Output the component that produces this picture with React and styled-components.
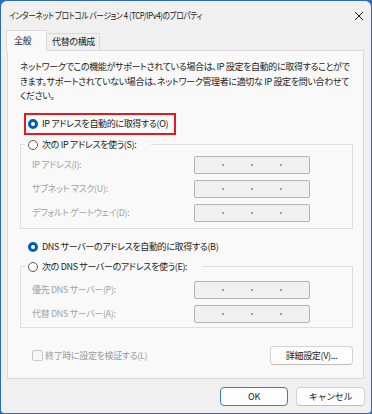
import React from 'react';
import styled, { createGlobalStyle, css } from 'styled-components';

const GlobalStyle = createGlobalStyle`
  html, body {
    margin: 0;
    padding: 0;
    background: #2f6ab8;
  }
  body {
    font-family: "Noto Sans CJK JP", "Noto Sans", sans-serif;
    font-feature-settings: "palt";
    color: #1a1a1a;
  }
  * {
    box-sizing: border-box;
  }
`;

const Window = styled.div`
  width: 372px;
  height: 414px;
  border: 1px solid #2f6ab8;
  border-radius: 7px 7px 4px 4px;
  background: #f0f0f0;
  display: flex;
  flex-direction: column;
  overflow: hidden;
`;

const TitleBar = styled.div`
  height: 29px;
  display: flex;
  align-items: center;
  justify-content: space-between;
  padding: 0 7px 0 8px;
  color: #1a1a1a;
  white-space: nowrap;
`;

const TitleText = styled.span`
  font-size: 9px;
  letter-spacing: -0.4px;
  transform: scaleX(0.85);
  transform-origin: left center;
`;

const Body = styled.div`
  padding: 0 7px 0 6px;
  display: flex;
  flex-direction: column;
  font-size: 9px;
  letter-spacing: -0.35px;
`;

const TabRow = styled.div`
  height: 20px;
  display: flex;
  align-items: flex-end;
`;

const Tab = styled.div`
  position: relative;
  width: ${(props) => props.width}px;
  height: 17px;
  padding-left: 5px;
  line-height: 16px;
  white-space: nowrap;
  background: #f0f0f0;
  border: 1px solid #dadada;
  border-bottom: none;
  border-left: none;

  ${(props) =>
    props.active &&
    css`
      height: 21px;
      margin-left: -1px;
      margin-bottom: -1px;
      padding-left: 7px;
      line-height: 20px;
      background: #f9f9f9;
      border-left: 1px solid #dadada;
      z-index: 1;
    `}
`;

const Panel = styled.div`
  height: 329px;
  background: #f9f9f9;
  border: 1px solid #dadada;
  padding: 9px 10px 0 12px;
  display: flex;
  flex-direction: column;
`;

const Description = styled.p`
  margin: 0;
  line-height: 14.5px;
`;

const Highlight = styled.div`
  margin: 9px 0 0 4px;
  width: 152px;
  height: 22px;
  border: 2px solid #e5191f;
  padding-left: 2px;
  display: flex;
  align-items: center;
`;

const RadioRow = styled.label`
  display: flex;
  align-items: center;
  gap: 4px;
  height: 14px;
  line-height: 14px;
  white-space: nowrap;

  ${(props) =>
    props.indent &&
    css`
      margin: 11px 0 0 8px;
    `}
`;

const RadioDot = styled.span`
  width: 10px;
  height: 10px;
  border-radius: 50%;
  flex: none;
  border: 1px solid #5a5a5a;
  background: #ffffff;

  ${(props) =>
    props.checked &&
    css`
      border: 3px solid #005fb8;
      background: #ffffff;
    `}
`;

const Group = styled.fieldset`
  margin: ${(props) => props.top}px 0 0 0;
  padding: 0 0 ${(props) => props.bottom}px 11px;
  border: 1px solid #dedede;
  min-width: 0;
`;

const Legend = styled.legend`
  margin-left: -7px;
  padding: 0 15px 0 3px;
  height: 14px;
`;

const FieldGrid = styled.div`
  margin-top: ${(props) => props.top}px;
  display: grid;
  grid-template-columns: 162px 116px;
  grid-auto-rows: 18px;
  row-gap: 6px;
  align-items: center;
`;

const FieldLabel = styled.span`
  color: #a3a3a3;
  white-space: nowrap;
`;

const IpBox = styled.div`
  height: 18px;
  background: #f0f0f0;
  border: 1px solid #b3b3b3;
  border-radius: 2px;
  display: flex;
  align-items: center;
  justify-content: space-evenly;
`;

const IpDot = styled.span`
  width: 2px;
  height: 2px;
  background: #b39c84;
`;

const BottomRow = styled.div`
  margin-top: 18px;
  display: flex;
  align-items: center;
  justify-content: space-between;
`;

const CheckRow = styled.label`
  margin-left: 12px;
  display: flex;
  align-items: center;
  gap: 2px;
  color: #9a9a9a;
`;

const CheckBox = styled.span`
  width: 11px;
  height: 11px;
  border: 1px solid #c8c8c8;
  border-radius: 2px;
  background: #f6f6f6;
`;

const Button = styled.button`
  height: 19px;
  width: ${(props) => props.width}px;
  padding: 0;
  font-family: inherit;
  font-size: 9px;
  letter-spacing: -0.35px;
  color: #1a1a1a;
  background: #fdfdfd;
  border: 1px solid #d3d3d3;
  border-bottom-color: #bcbcbc;
  border-radius: 4px;

  ${(props) =>
    props.primary &&
    css`
      border: 1px solid #3d7cc4;
    `}
`;

const Footer = styled.div`
  margin: 8px -1px 0 0;
  display: flex;
  justify-content: flex-end;
  gap: 8px;
`;

function CloseIcon() {
  return (
    <svg width="10" height="10" viewBox="0 0 10 10">
      <path d="M1 1 L9 9 M9 1 L1 9" stroke="#1a1a1a" strokeWidth="1" fill="none" />
    </svg>
  );
}

function IpField() {
  return (
    <IpBox>
      <IpDot />
      <IpDot />
      <IpDot />
    </IpBox>
  );
}

const ipRows = ['IP アドレス(I):', 'サブネット マスク(U):', 'デフォルト ゲートウェイ(D):'];
const dnsRows = ['優先 DNS サーバー(P):', '代替 DNS サーバー(A):'];

export default function App() {
  return (
    <>
      <GlobalStyle />
      <Window>
        <TitleBar>
          <TitleText>インターネット プロトコル バージョン 4 (TCP/IPv4)のプロパティ</TitleText>
          <CloseIcon />
        </TitleBar>
        <Body>
          <TabRow>
            <Tab active width={41}>全般</Tab>
            <Tab width={53}>代替の構成</Tab>
          </TabRow>
          <Panel>
            <Description>
              ネットワークでこの機能がサポートされている場合は、IP 設定を自動的に取得することができます。サポートされていない場合は、ネットワーク管理者に適切な IP 設定を問い合わせてください。
            </Description>
            <Highlight>
              <RadioRow>
                <RadioDot checked />
                IP アドレスを自動的に取得する(O)
              </RadioRow>
            </Highlight>
            <Group top={3} bottom={6}>
              <Legend>
                <RadioRow>
                  <RadioDot />
                  次の IP アドレスを使う(S):
                </RadioRow>
              </Legend>
              <FieldGrid top={4}>
                {ipRows.map((label) => (
                  <React.Fragment key={label}>
                    <FieldLabel>{label}</FieldLabel>
                    <IpField />
                  </React.Fragment>
                ))}
              </FieldGrid>
            </Group>
            <RadioRow indent>
              <RadioDot checked />
              DNS サーバーのアドレスを自動的に取得する(B)
            </RadioRow>
            <Group top={6} bottom={4}>
              <Legend>
                <RadioRow>
                  <RadioDot />
                  次の DNS サーバーのアドレスを使う(E):
                </RadioRow>
              </Legend>
              <FieldGrid top={7}>
                {dnsRows.map((label) => (
                  <React.Fragment key={label}>
                    <FieldLabel>{label}</FieldLabel>
                    <IpField />
                  </React.Fragment>
                ))}
              </FieldGrid>
            </Group>
            <BottomRow>
              <CheckRow>
                <CheckBox />
                終了時に設定を検証する(L)
              </CheckRow>
              <Button width={83}>詳細設定(V)...</Button>
            </BottomRow>
          </Panel>
          <Footer>
            <Button primary width={68}>OK</Button>
            <Button width={69}>キャンセル</Button>
          </Footer>
        </Body>
      </Window>
    </>
  );
}
